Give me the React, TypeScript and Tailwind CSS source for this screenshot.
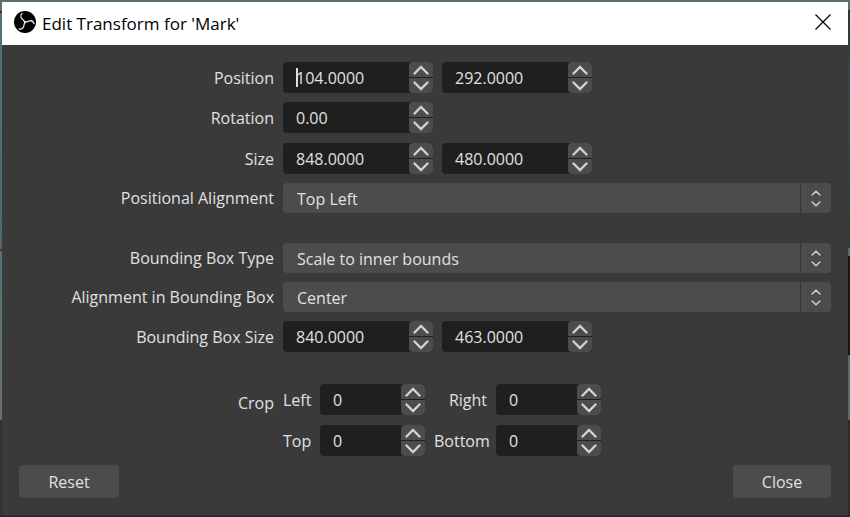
import { useState, type ReactNode } from "react";

function Chevron({ up = false, small = false }: { up?: boolean; small?: boolean }) {
  return (
    <svg
      viewBox="0 0 16 10"
      className={small ? "h-[6px] w-[10px]" : "h-[10px] w-4"}
      fill="none"
      stroke="#d2d2d2"
      strokeWidth={small ? 2.4 : 2.4}
      strokeLinecap="round"
      aria-hidden="true"
    >
      <path d={up ? "M1.5 8.5 L8 2 L14.5 8.5" : "M1.5 1.5 L8 8 L14.5 1.5"} />
    </svg>
  );
}

function Spin({
  id,
  label,
  initial,
  digits = 0,
  narrow = false,
  caret = false,
}: {
  id: string;
  label?: string;
  initial: number;
  digits?: number;
  narrow?: boolean;
  caret?: boolean;
}) {
  const [value, setValue] = useState(initial.toFixed(digits));
  const step = (by: number) => setValue((Number(value) + by).toFixed(digits));
  return (
    <div
      className={`relative flex h-[31px] shrink-0 overflow-hidden rounded bg-[#1f1f1f] ${narrow ? "w-[105px]" : "w-[150px]"}`}
    >
      {caret && <span className="absolute left-[13px] top-[6px] h-[19px] w-[2px] bg-[#e0e0e0]" />}
      <input
        id={id}
        aria-label={label}
        value={value}
        onChange={(e) => setValue(e.target.value)}
        className="w-0 min-w-0 flex-1 bg-transparent pl-[13px] pt-px text-[#e1e0e1] outline-none"
      />
      <div className="flex w-6 flex-col gap-px">
        <button
          type="button"
          aria-label="Increase"
          onClick={() => step(1)}
          className="flex flex-1 items-center justify-center rounded-t bg-[#4c4c4c]"
        >
          <Chevron up />
        </button>
        <button
          type="button"
          aria-label="Decrease"
          onClick={() => step(-1)}
          className="flex flex-1 items-center justify-center rounded-b bg-[#4c4c4c]"
        >
          <Chevron />
        </button>
      </div>
    </div>
  );
}

function Combo({ id, options }: { id: string; options: string[] }) {
  return (
    <div className="relative h-[30px] flex-1">
      <select
        id={id}
        className="h-full w-full appearance-none rounded bg-[#4c4c4c] pl-[14px] pr-10 pt-px text-[#e1e0e1] outline-none"
      >
        {options.map((o) => (
          <option key={o}>{o}</option>
        ))}
      </select>
      <span className="pointer-events-none absolute inset-y-0 right-0 flex w-[31px] flex-col items-center justify-center gap-[5px] border-l border-[#353535]">
        <Chevron up small />
        <Chevron small />
      </span>
    </div>
  );
}

function Row({ label, htmlFor, children }: { label: string; htmlFor: string; children: ReactNode }) {
  return (
    <div className="flex items-center gap-[9px]">
      <label htmlFor={htmlFor} className="w-[255px] shrink-0 text-right">
        {label}
      </label>
      {children}
    </div>
  );
}

const button = "h-[33px] rounded bg-[#4c4c4c] text-[#e1e0e1]";

export default function App() {
  return (
    <div className="grid min-h-screen grid-cols-[2px_1fr_2px] grid-rows-[2px_1fr_2px] bg-[#2a2829] font-['Open_Sans','Noto_Sans',sans-serif] text-[16px] leading-5 text-[#e1e0e1]">
      <div className="col-span-3 bg-[#5b6e74]" />
      <div className="bg-[linear-gradient(#5b6e74_9px,#7a1a1e_9px_11px,#56707a_11px,#4d6870_247px,#7a1a1e_247px_249px,#56707a_249px,#65706f_418px,#323232_418px)]" />
      <main className="flex flex-col bg-[#3a3a3a]">
        <header className="flex h-[43px] items-center bg-white pl-3 text-black">
          <svg viewBox="0 0 22 22" className="mb-1 size-[22px]" aria-hidden="true">
            <circle cx="11" cy="11" r="11" fill="#000" />
            <g fill="none" stroke="#e8e8e8" strokeWidth="1.3" strokeLinecap="round" strokeLinejoin="round">
              <path d="M11 11.8 C11 9 8 8.8 7 6.6 C6.3 5 6.8 3.6 8 2.4" />
              <path d="M11 11.8 C11 9 8 8.8 7 6.6 C6.3 5 6.8 3.6 8 2.4" transform="rotate(120 11 11)" />
              <path d="M11 11.8 C11 9 8 8.8 7 6.6 C6.3 5 6.8 3.6 8 2.4" transform="rotate(240 11 11)" />
            </g>
          </svg>
          <h1 className="flex-1 pl-[6px] text-[17px]">Edit Transform for &apos;Mark&apos;</h1>
          <button type="button" aria-label="Close window" className="flex h-full w-[50px] items-center justify-center pb-1">
            <svg viewBox="0 0 16 16" className="size-4" stroke="#000" strokeWidth="1.2" aria-hidden="true">
              <path d="M0.5 0.5 L15.5 15.5 M15.5 0.5 L0.5 15.5" />
            </svg>
          </button>
        </header>
        <form className="flex flex-1 flex-col px-[17px] pt-[17px]" onSubmit={(e) => e.preventDefault()}>
          <div className="flex flex-col gap-[9px]">
            <Row label="Position" htmlFor="pos">
              <Spin id="pos" initial={104} digits={4} caret />
              <Spin id="pos-y" label="Position Y" initial={292} digits={4} />
            </Row>
            <Row label="Rotation" htmlFor="rot">
              <Spin id="rot" initial={0} digits={2} />
            </Row>
          </div>
          <div className="mt-[10px] flex flex-col gap-[9px]">
            <Row label="Size" htmlFor="size">
              <Spin id="size" initial={848} digits={4} />
              <Spin id="size-y" label="Height" initial={480} digits={4} />
            </Row>
            <Row label="Positional Alignment" htmlFor="align">
              <Combo id="align" options={["Top Left", "Center", "Bottom Right"]} />
            </Row>
          </div>
          <div className="mt-[30px] flex flex-col gap-[9px]">
            <Row label="Bounding Box Type" htmlFor="type">
              <Combo id="type" options={["Scale to inner bounds", "No bounds"]} />
            </Row>
            <Row label="Alignment in Bounding Box" htmlFor="balign">
              <Combo id="balign" options={["Center", "Top Left"]} />
            </Row>
            <Row label="Bounding Box Size" htmlFor="bsize">
              <Spin id="bsize" initial={840} digits={4} />
              <Spin id="bsize-y" label="Bounding Box Height" initial={463} digits={4} />
            </Row>
          </div>
          <div role="group" aria-labelledby="crop" className="mt-8 flex gap-[9px]">
            <span id="crop" className="w-[255px] shrink-0 pt-[9px] text-right">Crop</span>
            <div className="grid grid-cols-[28px_105px_53px_105px] items-center gap-x-[9px] gap-y-[10px] text-right">
              <label htmlFor="left">Left</label>
              <Spin id="left" initial={0} narrow />
              <label htmlFor="right">Right</label>
              <Spin id="right" initial={0} narrow />
              <label htmlFor="top">Top</label>
              <Spin id="top" initial={0} narrow />
              <label htmlFor="bottom">Bottom</label>
              <Spin id="bottom" initial={0} narrow />
            </div>
          </div>
          <footer className="mt-[9px] flex justify-between">
            <button type="reset" className={`w-[100px] ${button}`}>Reset</button>
            <button type="button" className={`w-[98px] ${button}`}>Close</button>
          </footer>
        </form>
      </main>
      <div className="bg-[linear-gradient(#5b6e74_8px,#2b3538_8px,#2e4a4c_80px,#303a3a_246px,#4f6a70_246px_254px,#161616_254px_353px,#56686c_353px_418px,#2c2a2b_418px)]" />
      <div className="col-span-3" />
    </div>
  );
}
